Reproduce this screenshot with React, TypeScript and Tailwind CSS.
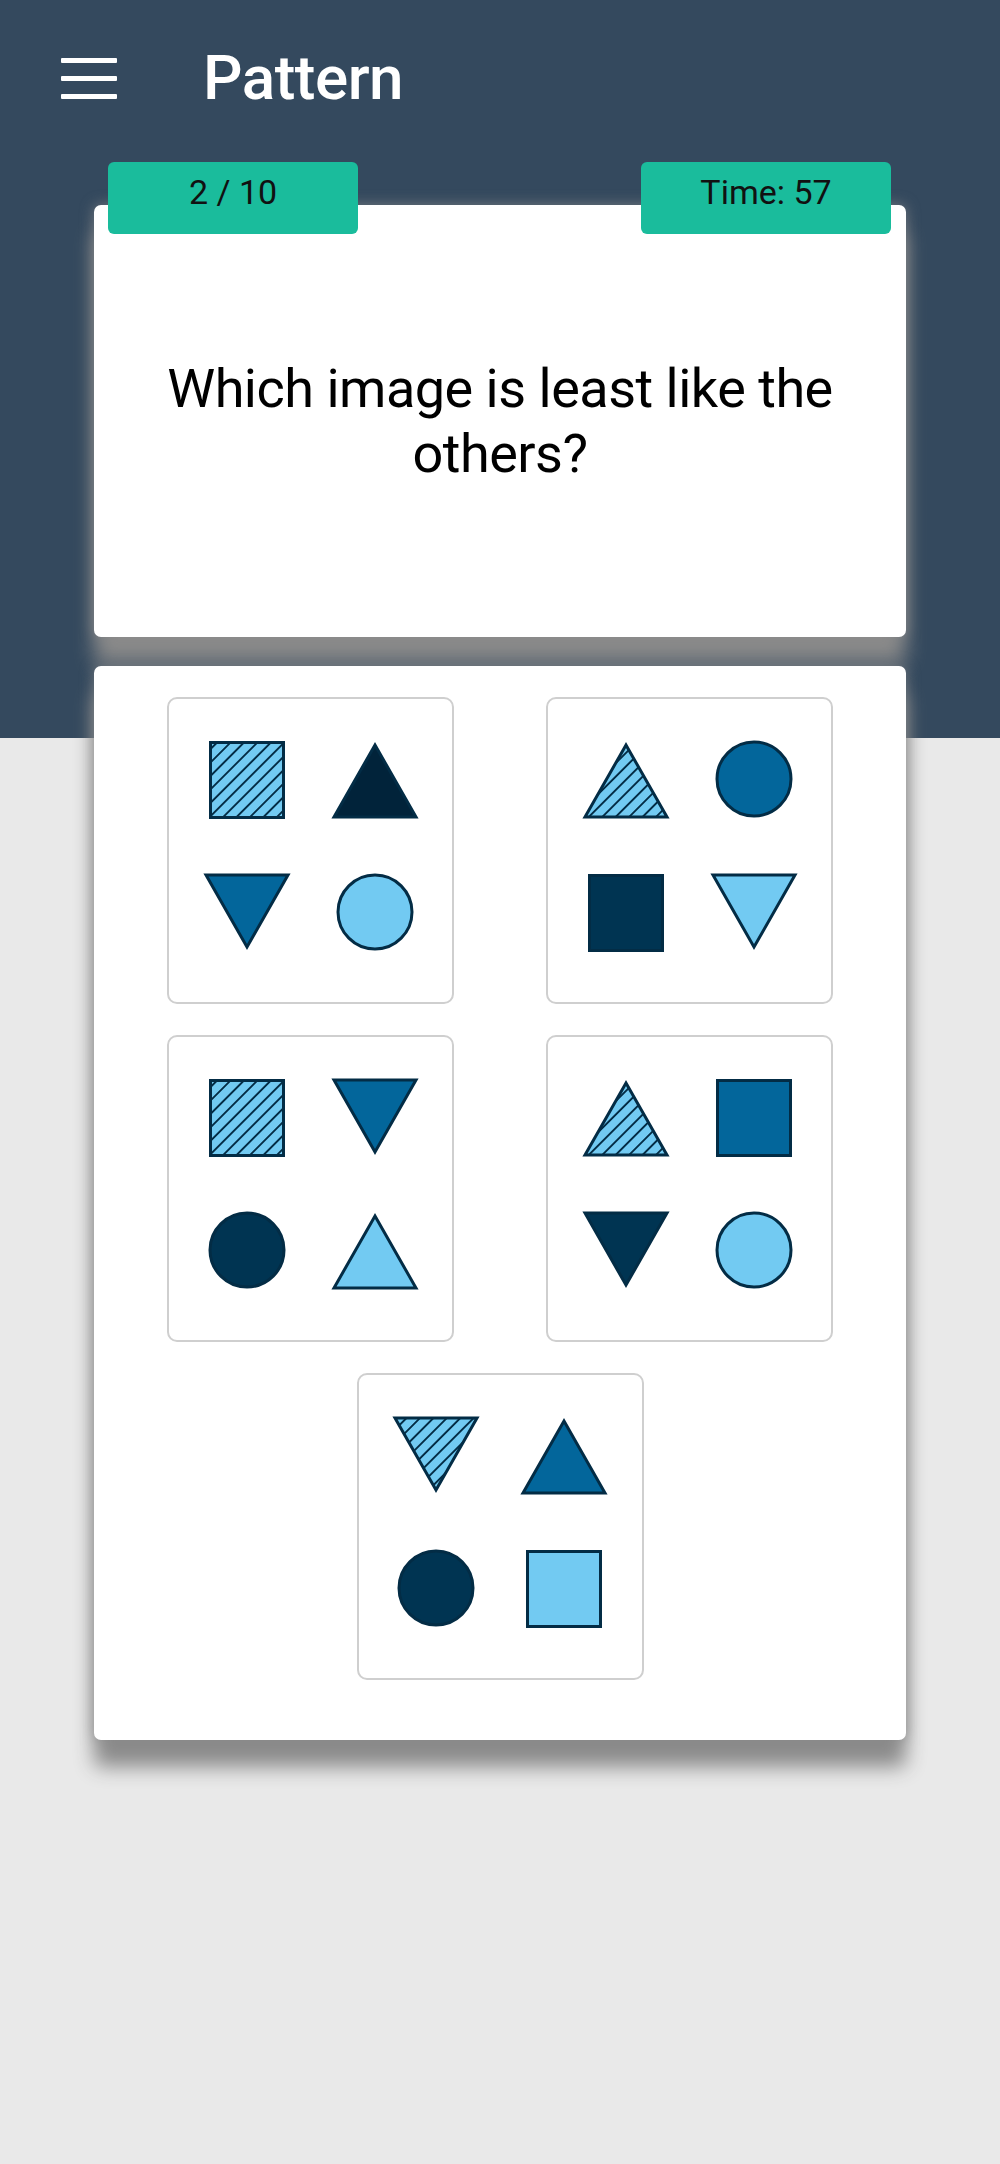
import React from "react";

const COL = {
  light: "#72caf2",
  mid: "#03669b",
  dark: "#003452",
  darkest: "#01233a",
  stroke: "#032c45",
};

type Kind = "square" | "up" | "down" | "circle";
type Spec = { kind: Kind; fill: string; hatch?: boolean };

function ShapeCell({ spec, id }: { spec: Spec; id: string }) {
  const fill = spec.hatch ? `url(#${id})` : spec.fill;
  const common = {
    fill,
    stroke: COL.stroke,
    strokeWidth: 3,
    strokeLinejoin: "miter" as const,
  };
  return (
    <svg width="100" height="100" viewBox="0 0 100 100" className="block">
      {spec.hatch && (
        <defs>
          <pattern
            id={id}
            patternUnits="userSpaceOnUse"
            width="9.5"
            height="9.5"
            patternTransform="rotate(45)"
          >
            <rect width="9.5" height="9.5" fill={COL.light} />
            <line x1="4.75" y1="0" x2="4.75" y2="9.5" stroke={COL.stroke} strokeWidth="1.9" />
          </pattern>
        </defs>
      )}
      {spec.kind === "square" && <rect x="13.5" y="13.5" width="73" height="75" {...common} />}
      {spec.kind === "circle" && <circle cx="50" cy="50" r="37" {...common} />}
      {spec.kind === "up" && <polygon points="50,16 91,88 9,88" {...common} />}
      {spec.kind === "down" && <polygon points="9,13 91,13 50,85" {...common} />}
    </svg>
  );
}

const OPTIONS: Spec[][] = [
  [
    { kind: "square", fill: COL.light, hatch: true },
    { kind: "up", fill: COL.darkest },
    { kind: "down", fill: COL.mid },
    { kind: "circle", fill: COL.light },
  ],
  [
    { kind: "up", fill: COL.light, hatch: true },
    { kind: "circle", fill: COL.mid },
    { kind: "square", fill: COL.dark },
    { kind: "down", fill: COL.light },
  ],
  [
    { kind: "square", fill: COL.light, hatch: true },
    { kind: "down", fill: COL.mid },
    { kind: "circle", fill: COL.dark },
    { kind: "up", fill: COL.light },
  ],
  [
    { kind: "up", fill: COL.light, hatch: true },
    { kind: "square", fill: COL.mid },
    { kind: "down", fill: COL.dark },
    { kind: "circle", fill: COL.light },
  ],
  [
    { kind: "down", fill: COL.light, hatch: true },
    { kind: "up", fill: COL.mid },
    { kind: "circle", fill: COL.dark },
    { kind: "square", fill: COL.light },
  ],
];

function OptionBox({ shapes, idx }: { shapes: Spec[]; idx: number }) {
  return (
    <div className="w-[287px] h-[307px] rounded-[10px] border-2 border-[#cfcfcf] bg-white flex items-center justify-center pb-[10px] cursor-pointer">
      <div className="grid grid-cols-2 gap-x-[28px] gap-y-[33px]">
        {shapes.map((s, i) => (
          <ShapeCell key={i} spec={s} id={`hatch-${idx}-${i}`} />
        ))}
      </div>
    </div>
  );
}

export default function App() {
  return (
    <div className="min-h-screen w-full font-[Roboto,sans-serif] bg-[linear-gradient(to_bottom,#34495e_0px,#34495e_738px,#e9e9e9_738px,#e9e9e9_100%)]">
      {/* App bar */}
      <div className="flex items-center pt-[42px] pl-[61px] h-[114px]">
        <div className="flex flex-col gap-[13px] w-[56px]">
          <div className="h-[5px] bg-white rounded-[1px]" />
          <div className="h-[5px] bg-white rounded-[1px]" />
          <div className="h-[5px] bg-white rounded-[1px]" />
        </div>
        <div className="ml-[86px] text-white text-[62px] leading-[72px] font-medium tracking-[-0.5px]">
          Pattern
        </div>
      </div>

      <div className="px-[94px] pb-[40px]">
        {/* Question card */}
        <div className="relative mt-[91px] h-[432px] bg-white rounded-[7px] shadow-[0_27px_20px_#8a8a8a,0_0_14px_rgba(138,138,138,0.75)] flex items-center justify-center px-[50px]">
          <div className="absolute top-[-43px] left-[14px] w-[250px] h-[72px] rounded-[6px] bg-[#1abc9c] flex justify-center pt-[10px]">
            <span className="text-[34px] leading-[40px] text-[#111]">2 / 10</span>
          </div>
          <div className="absolute top-[-43px] right-[15px] w-[250px] h-[72px] rounded-[6px] bg-[#1abc9c] flex justify-center pt-[10px]">
            <span className="text-[34px] leading-[40px] text-[#111]">Time: 57</span>
          </div>
          <p className="text-center text-black text-[54px] leading-[65px] tracking-[-0.5px]">
            Which image is least like the others?
          </p>
        </div>

        {/* Options card */}
        <div className="relative mt-[29px] bg-white rounded-[7px] shadow-[0_27px_20px_#8a8a8a,0_0_14px_rgba(138,138,138,0.75)] pt-[31px] pb-[60px] flex flex-wrap justify-center gap-x-[92px] gap-y-[31px]">
          {OPTIONS.map((shapes, i) => (
            <OptionBox key={i} shapes={shapes} idx={i} />
          ))}
        </div>
      </div>
    </div>
  );
}
